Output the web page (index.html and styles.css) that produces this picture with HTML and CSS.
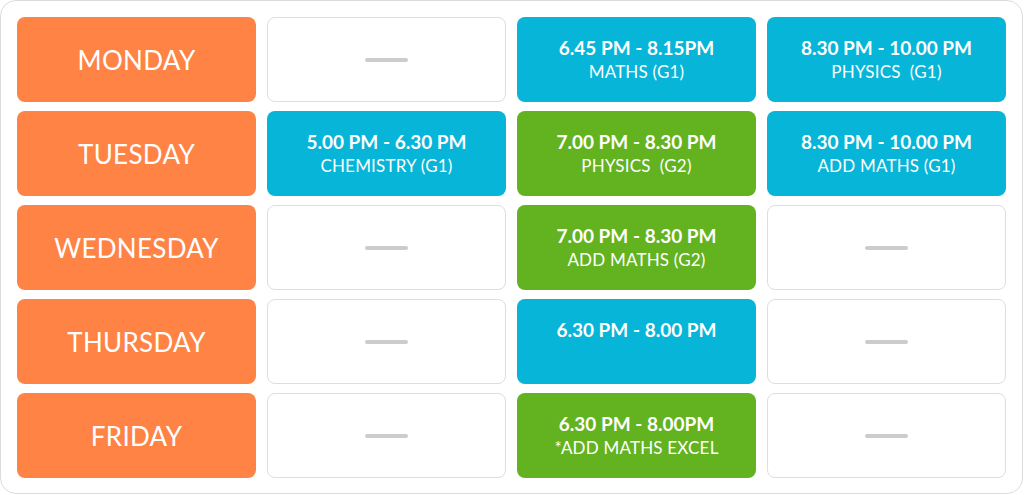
FILE: index.html
```html
<!DOCTYPE html>
<html lang="en">
<head>
<meta charset="utf-8">
<title>Timetable</title>
<link rel="stylesheet" href="styles.css">
</head>
<body>
<div class="board">
  <div class="grid">
    <div class="cell day">MONDAY</div>
    <div class="cell empty"><span class="dash"></span></div>
    <div class="cell blue"><div class="time">6.45 PM - 8.15PM</div><div class="subj">MATHS (G1)</div></div>
    <div class="cell blue"><div class="time">8.30 PM - 10.00 PM</div><div class="subj">PHYSICS&nbsp; (G1)</div></div>

    <div class="cell day">TUESDAY</div>
    <div class="cell blue"><div class="time">5.00 PM - 6.30 PM</div><div class="subj">CHEMISTRY (G1)</div></div>
    <div class="cell green"><div class="time">7.00 PM - 8.30 PM</div><div class="subj">PHYSICS&nbsp; (G2)</div></div>
    <div class="cell blue"><div class="time">8.30 PM - 10.00 PM</div><div class="subj">ADD MATHS (G1)</div></div>

    <div class="cell day">WEDNESDAY</div>
    <div class="cell empty"><span class="dash"></span></div>
    <div class="cell green"><div class="time">7.00 PM - 8.30 PM</div><div class="subj">ADD MATHS (G2)</div></div>
    <div class="cell empty"><span class="dash"></span></div>

    <div class="cell day">THURSDAY</div>
    <div class="cell empty"><span class="dash"></span></div>
    <div class="cell blue"><div class="time">6.30 PM - 8.00 PM</div><div class="subj">&nbsp;</div></div>
    <div class="cell empty"><span class="dash"></span></div>

    <div class="cell day">FRIDAY</div>
    <div class="cell empty"><span class="dash"></span></div>
    <div class="cell green"><div class="time">6.30 PM - 8.00PM</div><div class="subj">*ADD MATHS EXCEL</div></div>
    <div class="cell empty"><span class="dash"></span></div>
  </div>
</div>
</body>
</html>
```
FILE: styles.css
```css
* { box-sizing: border-box; }
html, body { margin: 0; padding: 0; background: #ffffff; }
body { font-family: "Lato", "Liberation Sans", sans-serif; }

.board {
  width: 1023px;
  height: 494px;
  border: 1px solid #dcdcdc;
  border-radius: 16px;
  padding: 16px 16px 15px 16px;
  background: #ffffff;
}

.grid {
  display: grid;
  grid-template-columns: repeat(4, 239px);
  grid-template-rows: repeat(5, 85px);
  column-gap: 11px;
  row-gap: 9px;
}

.cell {
  border-radius: 8px;
  display: flex;
  flex-direction: column;
  align-items: center;
  justify-content: center;
  color: #ffffff;
  text-align: center;
}

.day {
  background: #ff8345;
  font-size: 26px;
  letter-spacing: 0.3px;
}

.blue { background: #06b5d7; }
.green { background: #63b320; }

.time {
  font-weight: 700;
  font-size: 19px;
  line-height: 24px;
}

.subj {
  font-size: 17px;
  line-height: 24px;
  letter-spacing: 0.2px;
}

.empty {
  border: 1px solid #dedede;
  background: #ffffff;
}

.dash {
  display: block;
  width: 43px;
  height: 4px;
  border-radius: 2px;
  background: #cccccc;
}
```
